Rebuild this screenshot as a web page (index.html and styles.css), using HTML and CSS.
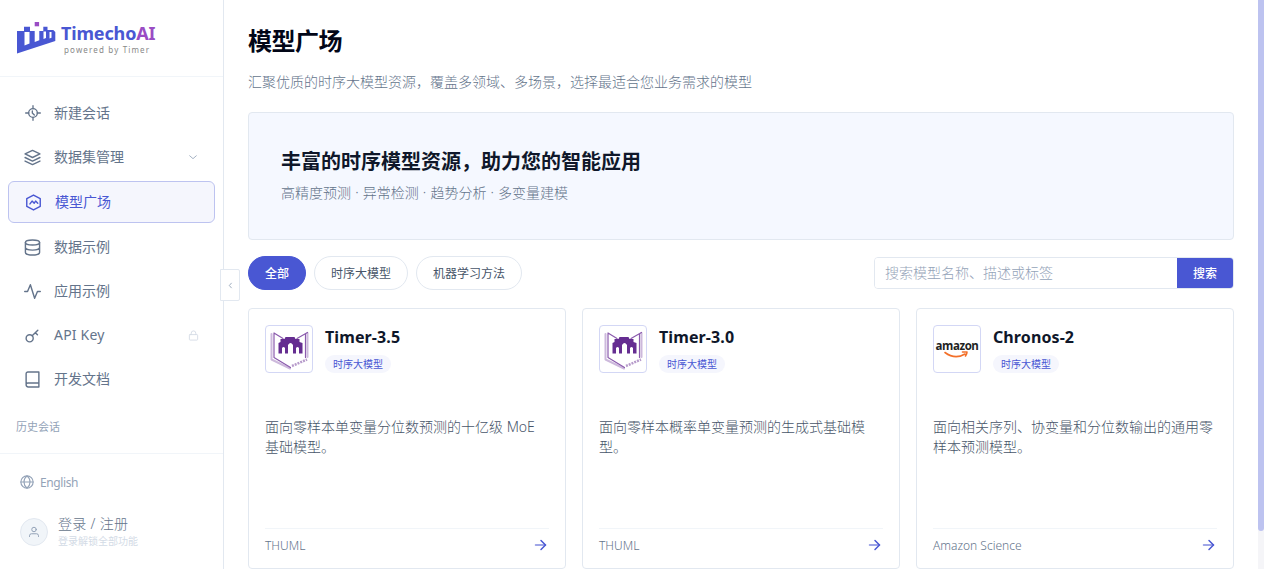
FILE: index.html
```
<!DOCTYPE html>
<html lang="zh-CN">
<head>
  <meta charset="UTF-8">
  <meta name="viewport" content="width=device-width, initial-scale=1.0">
  <title>模型广场 - TimechoAI</title>
  <link rel="stylesheet" href="styles.css">
</head>
<body>
<div class="app">
  <aside class="sidebar">
    <div class="brand">
      <svg class="brand-mark" width="39" height="32" viewBox="0 0 39 32">
        <path fill="#4957d3" fill-rule="evenodd" d="M0 9h7V4.700h6V9h4.700v11l4.600-1.700V9h4V4.700h4.200V8h5.800l2 2v9L0 31.500zM7.500 10v13.500l5-2V10zM26.500 9.500V17l2.500-1V9.500zM32.500 10v6.500l2-.8V10z"/>
        <rect x="17.700" y="0" width="4.400" height="4.300" fill="#9a4cc4"/>
      </svg>
      <div class="brand-text">
        <div class="brand-name">Timecho<span>AI</span></div>
        <div class="brand-sub">powered by Timer</div>
      </div>
    </div>

    <nav class="nav">
      <a class="nav-item">
        <svg class="icon icon-new" viewBox="0 0 24 24"><circle cx="12" cy="12" r="6.500"/><path d="M12 1v4.500M12 18.500V23M1 12h4.500M18.500 12H23M11 9v3l3 3"/></svg>
        <span>新建会话</span>
      </a>
      <a class="nav-item">
        <svg class="icon" viewBox="0 0 24 24"><path d="M12 2L1.500 7 12 12l10.500-5zM1.500 12L12 17l10.500-5M1.500 17L12 22l10.500-5"/></svg>
        <span>数据集管理</span>
        <svg class="nav-extra chevron" viewBox="0 0 24 24"><path d="M4 9l8 7 8-7"/></svg>
      </a>
      <a class="nav-item active">
        <svg class="icon" viewBox="0 0 24 24"><path d="M12 1.500l9.500 5v11l-9.500 5-9.500-5v-11zM7 14l3-4 3 3 2-3 3 3"/></svg>
        <span>模型广场</span>
      </a>
      <a class="nav-item">
        <svg class="icon" viewBox="0 0 24 24"><ellipse cx="12" cy="5" rx="10" ry="3.500"/><path d="M2 5v14c0 2 4.500 3.700 10 3.700S22 21 22 19V5M2 12c0 2 4.500 3.700 10 3.700S22 14 22 12"/></svg>
        <span>数据示例</span>
      </a>
      <a class="nav-item">
        <svg class="icon" viewBox="0 0 24 24"><path d="M1 12h4l4-9.500 6 19 4-9.500h4"/></svg>
        <span>应用示例</span>
      </a>
      <a class="nav-item">
        <svg class="icon" viewBox="0 0 24 24"><circle cx="8" cy="16" r="5"/><path d="M11.500 12.500L19.500 4.500M16 8l3 3"/></svg>
        <span class="latin">API Key</span>
        <svg class="nav-extra lock" viewBox="0 0 24 24"><rect x="3" y="10" width="18" height="12" rx="1.500"/><path d="M7 10V7a5 5 0 0 1 10 0v3"/></svg>
      </a>
      <a class="nav-item">
        <svg class="icon" viewBox="0 0 24 24"><path d="M3 19V4a2.500 2.500 0 0 1 2.500-2.500H21v21H6A3 3 0 0 1 3 19.500 2.500 2.500 0 0 1 5.500 17H21"/></svg>
        <span>开发文档</span>
      </a>
    </nav>
    <div class="history-title">历史会话</div>

    <div class="sidebar-footer">
      <div class="lang">
        <svg class="icon-globe" viewBox="0 0 24 24"><circle cx="12" cy="12" r="10.500"/><path d="M1.500 12h21M12 1.500c7 6 7 15 0 21M12 1.500c-7 6-7 15 0 21"/></svg>
        <span>English</span>
      </div>
      <div class="user">
        <div class="avatar">
          <svg viewBox="0 0 24 24"><circle cx="12" cy="7" r="4.500"/><path d="M3 21v-1.500a4 4 0 0 1 4-4h10a4 4 0 0 1 4 4V21"/></svg>
        </div>
        <div class="user-info">
          <div class="user-name">登录 / 注册</div>
          <div class="user-hint">登录解锁全部功能</div>
        </div>
      </div>
    </div>
    <button class="collapse"><svg viewBox="0 0 24 24"><path d="M15 4l-7 8 7 8"/></svg></button>
  </aside>

  <main class="main">
    <h1 class="page-title">模型广场</h1>
    <p class="page-desc">汇聚优质的时序大模型资源，覆盖多领域、多场景，选择最适合您业务需求的模型</p>

    <section class="banner">
      <h2>丰富的时序模型资源，助力您的智能应用</h2>
      <p>高精度预测 · 异常检测 · 趋势分析 · 多变量建模</p>
    </section>

    <div class="toolbar">
      <div class="filters">
        <button class="pill pill-active">全部</button>
        <button class="pill">时序大模型</button>
        <button class="pill">机器学习方法</button>
      </div>
      <div class="search">
        <input type="text" placeholder="搜索模型名称、描述或标签">
        <button>搜索</button>
      </div>
    </div>

    <div class="cards">
      <article class="card">
        <div class="card-head">
          <div class="logo">
            <svg viewBox="0 0 46 46">
              <path class="thuml-page" d="M5.500 8v25.500L24 42.500M41.500 7v24"/>
              <path class="thuml-line" d="M8 7v24.500L24.500 41.500M8 7l9 5.500M41.500 6.500L31 12.500M39.500 8v23.500"/>
              <path class="thuml-dash" d="M26 40l15-6.500"/>
              <path class="thuml-gate" d="M12.500 27.500V17l2-1v-3h4l1-2h9l1 2h4v3l3 1v10.500H33V22q-1.500-2-3 0v5.500h-3V19q-2.500-4-5 0v8.500h-3V22q-1.500-2-3 0v5.500z"/>
            </svg>
          </div>
          <div class="card-info">
            <h3>Timer-3.5</h3>
            <span class="tag">时序大模型</span>
          </div>
        </div>
        <p class="card-desc">面向零样本单变量分位数预测的十亿级 MoE 基础模型。</p>
        <div class="card-foot">
          <span>THUML</span>
          <svg class="arrow" viewBox="0 0 14 14"><path class="shaft" d="M1.500 7h10"/><path d="M7 2.500L11.500 7 7 11.500"/></svg>
        </div>
      </article>

      <article class="card">
        <div class="card-head">
          <div class="logo">
            <svg viewBox="0 0 46 46">
              <path class="thuml-page" d="M5.500 8v25.500L24 42.500M41.500 7v24"/>
              <path class="thuml-line" d="M8 7v24.500L24.500 41.500M8 7l9 5.500M41.500 6.500L31 12.500M39.500 8v23.500"/>
              <path class="thuml-dash" d="M26 40l15-6.500"/>
              <path class="thuml-gate" d="M12.500 27.500V17l2-1v-3h4l1-2h9l1 2h4v3l3 1v10.500H33V22q-1.500-2-3 0v5.500h-3V19q-2.500-4-5 0v8.500h-3V22q-1.500-2-3 0v5.500z"/>
            </svg>
          </div>
          <div class="card-info">
            <h3>Timer-3.0</h3>
            <span class="tag">时序大模型</span>
          </div>
        </div>
        <p class="card-desc">面向零样本概率单变量预测的生成式基础模型。</p>
        <div class="card-foot">
          <span>THUML</span>
          <svg class="arrow" viewBox="0 0 14 14"><path class="shaft" d="M1.500 7h10"/><path d="M7 2.500L11.500 7 7 11.500"/></svg>
        </div>
      </article>

      <article class="card">
        <div class="card-head">
          <div class="logo logo-amazon">
            <span>amazon</span>
            <svg viewBox="0 0 26 8"><path d="M1 1.500q10 7.500 20 1.500M18.500 1h4.500q0 2-1.500 4"/></svg>
          </div>
          <div class="card-info">
            <h3>Chronos-2</h3>
            <span class="tag">时序大模型</span>
          </div>
        </div>
        <p class="card-desc">面向相关序列、协变量和分位数输出的通用零样本预测模型。</p>
        <div class="card-foot">
          <span>Amazon Science</span>
          <svg class="arrow" viewBox="0 0 14 14"><path class="shaft" d="M1.500 7h10"/><path d="M7 2.500L11.500 7 7 11.500"/></svg>
        </div>
      </article>
    </div>
  </main>
  <div class="scroll-track"><div class="scroll-thumb"></div></div>
</div>
</body>
</html>
```
FILE: styles.css
```
*, *::before, *::after { box-sizing: border-box; }
body { margin: 0; background: #fff; color: #64748b; font-family: "Noto Sans", "Noto Sans CJK SC", sans-serif; font-size: 14px; overflow: hidden; }
h1, h2, h3, p { margin: 0; }
button, input { font-family: inherit; }
svg { fill: none; stroke: currentColor; stroke-width: 2; stroke-linecap: round; stroke-linejoin: round; display: block; flex-shrink: 0; }
.app { display: flex; height: 569px; }

/* Sidebar */
.sidebar { position: relative; width: 224px; flex-shrink: 0; border-right: 1px solid #e2e8f0; display: flex; flex-direction: column; }
.brand { height: 77px; border-bottom: 1px solid #f1f5f9; display: flex; padding: 22px 0 0 17px; }
.brand-mark { stroke: none; }
.brand-text { padding-left: 5px; }
.brand-name { font-size: 18px; font-weight: 700; line-height: 22px; letter-spacing: -0.15px; color: #4957d3; }
.brand-name span { color: #9a4cc4; }
.brand-sub { font-size: 8px; line-height: 11px; letter-spacing: 1.15px; color: #888; padding-left: 3px; white-space: nowrap; }
.nav { padding: 16px 8px 0; display: flex; flex-direction: column; gap: 4px; }
.nav-item { height: 40px; padding: 0 16px; display: flex; align-items: center; color: #64748b; border-radius: 6px; line-height: 20px; }
.nav-item .icon { width: 17px; height: 17px; margin-right: 13px; }
.nav-item .icon-new { width: 16px; height: 16px; margin: 0 13px 0 1px; }
.nav-item.active { height: 42px; border: 1px solid #bdc3f0; background: #f5f6fd; color: #4957d3; }
.nav-item .latin { letter-spacing: 0.2px; }
.nav-extra { width: 11px; height: 11px; margin-left: auto; }
.chevron { color: #94a3b8; width: 10px; height: 10px; margin-right: 1px; }
.lock { color: #d5dce6; }
.history-title { padding: 20px 16px 0; font-size: 11px; line-height: 16px; color: #94a3b8; }
.sidebar-footer { margin-top: auto; height: 116px; border-top: 1px solid #f1f5f9; padding: 19px 20px 0; }
.lang { display: flex; align-items: center; gap: 6px; height: 18px; font-size: 12px; letter-spacing: -0.4px; color: #94a3b8; }
.icon-globe { width: 14px; height: 14px; }
.user { display: flex; align-items: center; gap: 10px; margin-top: 23px; }
.avatar { width: 28px; height: 28px; border-radius: 50%; border: 1px solid #e2e8f0; background: #f1f5f9; color: #94a3b8; display: flex; align-items: center; justify-content: center; }
.avatar svg { width: 12px; height: 12px; }
.user-name { line-height: 20px; font-weight: 300; letter-spacing: 0.3px; }
.user-hint { font-size: 10px; line-height: 14px; padding-bottom: 1px; color: #d3dbe6; }
.collapse { position: absolute; top: 269px; right: -17px; width: 20px; height: 32px; padding: 0; border: 1px solid #e2e8f0; border-radius: 0 2px 2px 0; background: #fff; color: #94a3b8; display: flex; align-items: center; justify-content: center; }
.collapse svg { width: 7px; height: 7px; stroke-width: 3; }

/* Main */
.main { flex: 1; min-width: 0; padding: 24px 24px 0; }
.page-title { font-size: 24px; line-height: 34px; font-weight: 700; letter-spacing: -0.5px; color: #020617; }
.page-desc { margin-top: 14px; line-height: 20px; font-weight: 300; }
.banner { margin-top: 20px; height: 128px; border: 1px solid #e2e8f0; border-radius: 4px; background: #f5f8ff; padding: 35px 32px 0; }
.banner h2 { font-size: 20px; line-height: 28px; font-weight: 700; color: #0f172a; }
.banner p { margin-top: 7px; line-height: 20px; font-weight: 300; word-spacing: 0.5px; }
.toolbar { margin-top: 16px; display: flex; justify-content: space-between; align-items: center; }
.filters { display: flex; gap: 8px; }
.pill { height: 34px; padding: 0 16px; border: 1px solid #e2e8f0; border-radius: 17px; background: #fff; color: #475569; font-size: 12px; }
.pill-active { background: #4957d3; border-color: #4957d3; color: #fff; font-weight: 500; }
.search { display: flex; width: 360px; height: 32px; border: 1px solid #e2e8f0; border-radius: 4px; overflow: hidden; }
.search input { flex: 1; min-width: 0; border: 0; padding: 0 10px 1px; font-size: 14px; font-weight: 300; outline: none; }
.search input::placeholder { color: #94a3b8; opacity: 1; }
.search button { width: 56px; border: 0; padding: 0; background: #4957d3; color: #fff; font-size: 12px; font-weight: 500; }

.cards { margin-top: 18px; display: grid; grid-template-columns: repeat(3, 1fr); gap: 16px; }
.card { height: 261px; border: 1px solid #e2e8f0; border-radius: 4px; padding: 16px 16px 14px; display: flex; flex-direction: column; }
.card-head { display: flex; gap: 12px; height: 48px; }
.logo { width: 48px; height: 48px; border: 1px solid #d3d7f5; border-radius: 4px; background: #fff; overflow: hidden; }
.thuml-page { stroke: #cdb9dc; stroke-width: 2; }
.thuml-line { stroke: #8b5bad; stroke-width: 1.2; }
.thuml-dash { stroke: #b79bcb; stroke-width: 2.5; stroke-dasharray: 2 1; stroke-linecap: butt; }
.thuml-gate { fill: #652d91; stroke: none; }
.logo-amazon { display: flex; flex-direction: column; align-items: center; padding-top: 13px; }
.logo-amazon span { font-family: "Open Sans", sans-serif; font-size: 11.5px; line-height: 13px; font-weight: 700; letter-spacing: -0.4px; color: #221f1f; }
.logo-amazon svg { width: 26px; height: 8px; color: #f3702a; stroke-width: 1.6; margin-top: -1px; }
.card-info h3 { font-size: 16px; line-height: 24px; font-weight: 700; letter-spacing: 0.1px; color: #0f172a; }
.tag { display: block; width: 66px; margin-top: 6px; border-radius: 9px; background: #f5f6fd; color: #4957d3; font-size: 10px; line-height: 18px; text-align: center; }
.card-desc { margin-top: 44px; line-height: 20px; font-weight: 300; color: #475569; }
.card-foot { margin-top: auto; height: 26px; border-top: 1px solid #f1f5f9; display: flex; align-items: flex-end; justify-content: space-between; font-size: 12px; line-height: 16px; font-weight: 300; }
.arrow { width: 14px; height: 14px; margin: 0 1px 2px 0; color: #4957d3; stroke-width: 1.5; }
.arrow .shaft { stroke: #8089e0; }

.scroll-track { width: 6px; height: 569px; background: #f5f5f8; }
.scroll-thumb { height: 531px; background: #bdc3f0; border-radius: 0 0 3px 3px; }
```
